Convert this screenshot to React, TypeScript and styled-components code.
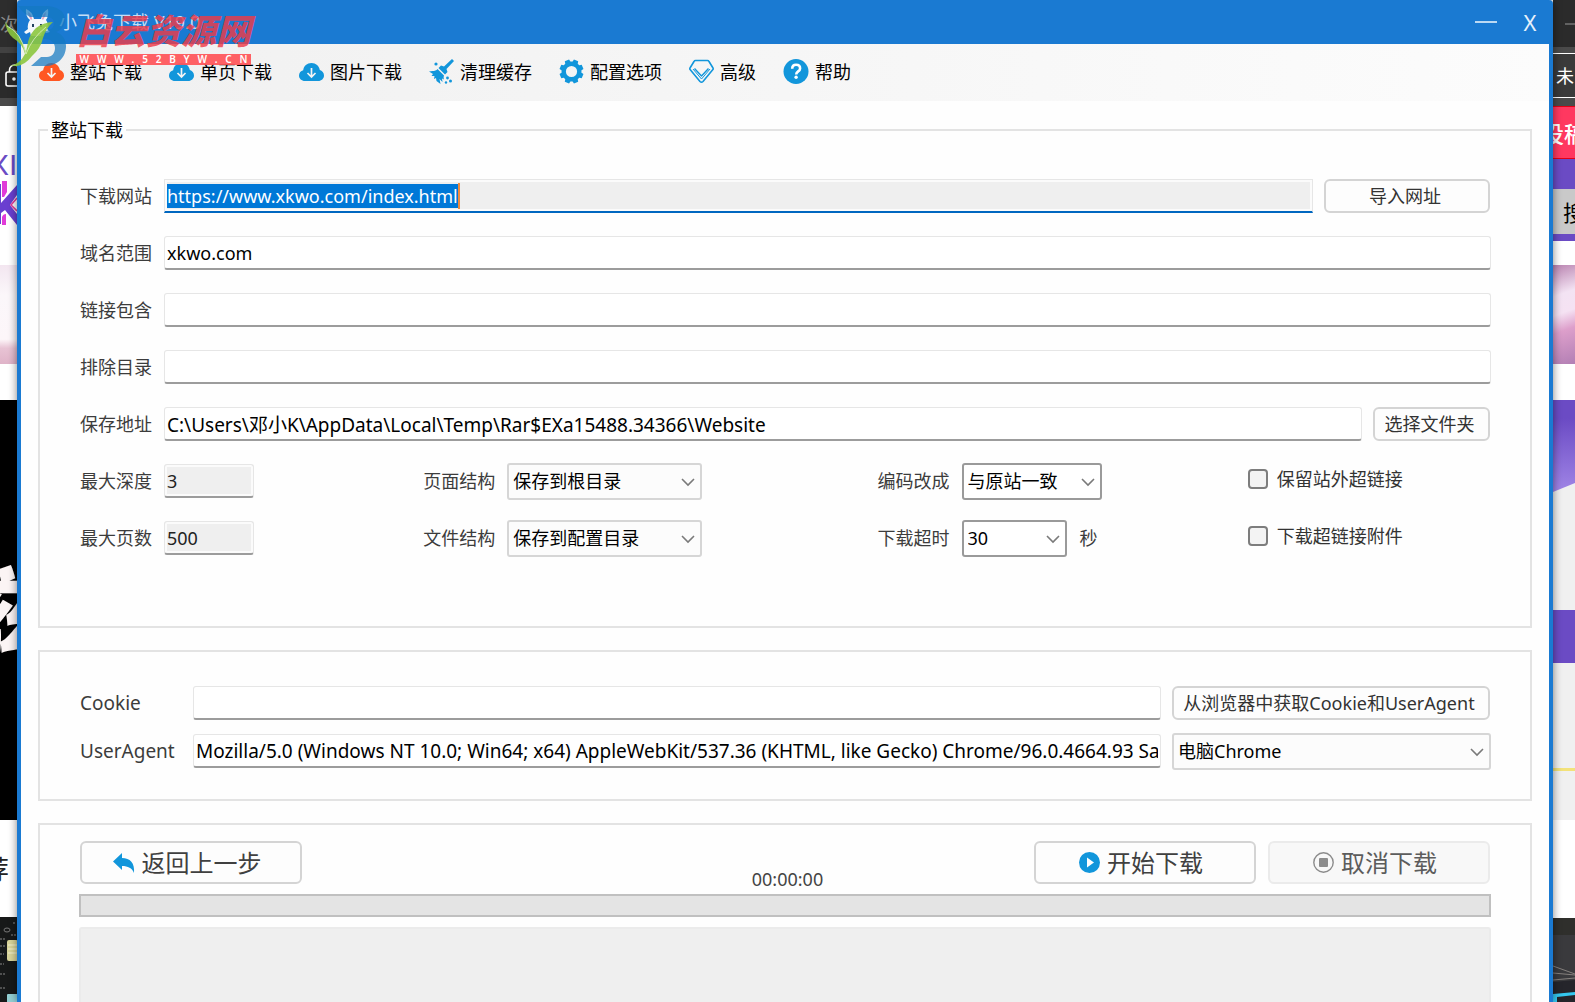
import React, { useEffect, useRef } from "react";
import styled, { createGlobalStyle, css } from "styled-components";

const blue = "#1a7ad2";
const iconBlue = "#1296db";

const GlobalStyle = createGlobalStyle`
  *, *::before, *::after { box-sizing: border-box; }
  html, body, #root { height: 100%; }
  body {
    margin: 0;
    overflow: hidden;
    background: #fff;
    color: #000;
    font-family: "Noto Sans", "Noto Sans CJK SC", sans-serif;
    font-size: 18px;
    line-height: 26px;
  }
  button, input, select { font: inherit; color: inherit; margin: 0; }
`;

/* ---------- desktop behind the window ---------- */

const Desktop = styled.div`
  position: relative;
  display: flex;
  height: 100vh;
  overflow: hidden;
`;

const Strip = styled.div<{ $width: number }>`
  flex: 0 0 ${(p) => p.$width}px;
  display: flex;
  flex-direction: column;
  overflow: hidden;
`;

const Band = styled.div<{
  $h?: number;
  $bg: string;
  $color?: string;
  $size?: number;
  $weight?: number;
  $shift?: number;
  $line?: string;
  $italic?: boolean;
}>`
  flex: ${(p) => (p.$h ? `0 0 ${p.$h}px` : "1 1 0")};
  display: flex;
  align-items: center;
  overflow: hidden;
  white-space: nowrap;
  background: ${(p) => p.$bg};
  color: ${(p) => p.$color ?? "#000"};
  font-size: ${(p) => p.$size ?? 18}px;
  font-weight: ${(p) => p.$weight ?? 400};
  font-style: ${(p) => (p.$italic ? "italic" : "normal")};
  text-indent: ${(p) => p.$shift ?? 0}px;
  ${(p) => p.$line && css`border: solid ${p.$line}; border-width: 1px 0;`}
`;

const SiteName = styled(Band)`
  font-family: "Liberation Sans", sans-serif;
`;

/* ---------- window ---------- */

const Window = styled.div`
  position: relative;
  flex: 1 1 0;
  min-width: 0;
  display: flex;
  flex-direction: column;
  background: #fefefe;
  border: solid ${blue};
  border-width: 0 4px;
  border-radius: 4px 4px 0 0;
  box-shadow: 0 0 8px rgba(0, 0, 0, 0.5);
`;

const TitleBar = styled.header`
  flex: 0 0 44px;
  display: flex;
  align-items: center;
  padding: 0 8px 0 2px;
  background: ${blue};
  color: #fff;
`;

const Title = styled.h1`
  margin: 0 auto 0 6px;
  font-size: 18px;
  font-weight: 400;
  line-height: 26px;
  color: #c4def6;
`;

const CaptionButton = styled.button`
  display: grid;
  place-items: center;
  width: 22px;
  height: 30px;
  margin-left: 22px;
  padding: 0;
  border: 0;
  background: none;
  font-size: 22px;
  line-height: 30px;
  color: #e6f1fb;
`;

const Toolbar = styled.nav`
  flex: 0 0 57px;
  display: flex;
  align-items: center;
  gap: 27px;
  padding: 0 18px 2px;
  background: linear-gradient(90deg, #f0f0f0, #fcfcfc);
`;

const ToolButton = styled.button`
  display: flex;
  align-items: center;
  gap: 6px;
  padding: 0;
  border: 0;
  background: none;
  white-space: nowrap;
`;

const Main = styled.main`
  flex: 1 1 0;
  min-height: 0;
  display: flex;
  flex-direction: column;
  gap: 22px;
  padding: 17px 17px 0;
  overflow: hidden;
`;

const groupFrame = css`
  flex: none;
  min-width: 0;
  margin: 0;
  border: 2px solid #e3e3e3;
`;

const FieldGroup = styled.fieldset`
  ${groupFrame}
  padding: 0;
`;

const Legend = styled.legend`
  height: 24px;
  margin-left: 8px;
  padding: 0 3px;
  line-height: 24px;
`;

const Group = styled.section`
  ${groupFrame}
`;

const ProgressGroup = styled(Group)`
  flex: 1 1 0;
  display: flex;
  flex-direction: column;
  gap: 10px;
  padding: 16px 39px 0;
  border-bottom: 0;
`;

const Rows = styled.div<{ $gap: number; $top: number; $bottom: number }>`
  display: flex;
  flex-direction: column;
  gap: ${(p) => p.$gap}px;
  padding: ${(p) => p.$top}px 39px ${(p) => p.$bottom}px 40px;
`;

const Row = styled.div`
  display: flex;
  align-items: center;
  height: 38px;
  gap: 11px;
`;

const OptionRow = styled.div`
  display: grid;
  grid-template-columns: 343fr 454fr 370fr 243fr;
  align-items: center;
  height: 38px;
`;

const Field = styled.div<{ $grow?: boolean }>`
  display: flex;
  align-items: center;
  min-width: 0;
  flex: ${(p) => (p.$grow ? "1 1 0" : "none")};
`;

const Label = styled.label<{ $width: number; $latin?: boolean }>`
  flex: 0 0 ${(p) => p.$width}px;
  font-size: ${(p) => (p.$latin ? 19 : 18)}px;
  color: #3c3c3c;
  white-space: nowrap;
`;

const TextInput = styled.input<{ $width?: number; $latin?: boolean }>`
  flex: ${(p) => (p.$width ? `0 0 ${p.$width}px` : "1 1 0")};
  width: ${(p) => (p.$width ? `${p.$width}px` : "auto")};
  min-width: 0;
  height: 34px;
  padding: 0 2px;
  border: 1px solid #e6e6e6;
  border-bottom: 2px solid #9c9c9c;
  border-radius: 3px;
  background: #fff;
  outline: 0;
  font-size: ${(p) => (p.$latin ? 19 : 18)}px;
  &[readonly] {
    background: #efefef;
    box-shadow: inset 0 0 0 2px #fbfbfb;
    color: #222;
  }
`;

const UrlInput = styled(TextInput)`
  border-bottom-color: #0067c0;
  border-radius: 0;
  &[readonly] {
    background: linear-gradient(#f08a3c, #f08a3c) 293px 3px / 2px 26px no-repeat #efefef;
  }
  &::selection {
    background: #0078d7;
    color: #fff;
  }
`;

const SelectBox = styled.div<{ $width: number; $strong?: boolean }>`
  position: relative;
  flex: 0 0 ${(p) => p.$width}px;
  select {
    appearance: none;
    display: block;
    width: 100%;
    height: 37px;
    padding: 0 30px 0 4px;
    border: 2px solid ${(p) => (p.$strong ? "#9a9a9a" : "#d6d6d6")};
    border-radius: 3px;
    background: ${(p) => (p.$strong ? "#fff" : "#fcfcfc")};
    outline: 0;
  }
  svg {
    position: absolute;
    right: 6px;
    top: 13px;
    pointer-events: none;
  }
`;

const Unit = styled.span`
  margin-left: 13px;
  color: #3c3c3c;
`;

const Check = styled.label`
  display: flex;
  align-items: center;
  gap: 9px;
  padding-bottom: 4px;
  color: #333;
  white-space: nowrap;
  input {
    appearance: none;
    width: 20px;
    height: 20px;
    border: 2px solid #7d7d7d;
    border-radius: 4px;
    background: #f3f3f3;
  }
`;

const PushButton = styled.button<{ $width: number }>`
  flex: 0 0 ${(p) => p.$width}px;
  height: 34px;
  margin-right: 1px;
  padding: 0 4px 0 0;
  border: 2px solid #d4d4d4;
  border-radius: 6px;
  background: #fdfdfd;
  color: #333;
  white-space: nowrap;
  line-height: 26px;
`;

const Actions = styled.div`
  display: grid;
  grid-template-columns: 1fr auto 1fr;
  padding: 0 1px;
`;

const ActionGroup = styled.div`
  display: flex;
  justify-content: flex-end;
  gap: 12px;
`;

const ActionButton = styled.button`
  display: flex;
  align-items: center;
  justify-content: center;
  gap: 7px;
  width: 222px;
  height: 43px;
  padding: 0 8px 0 0;
  border: 2px solid #d4d4d4;
  border-radius: 6px;
  background: #fdfdfd;
  color: #404040;
  font-size: 24px;
  line-height: 34px;
  white-space: nowrap;
  &:disabled {
    border-color: #ebebeb;
    background: #f8f8f8;
    color: #5c5c5c;
  }
`;

const Timer = styled.time`
  align-self: flex-end;
  margin-bottom: -8px;
  padding-left: 5px;
  color: #444;
`;

const Progress = styled.div`
  flex: 0 0 23px;
  border: 2px solid #c0c0c0;
  background: #e4e4e4;
`;

const Log = styled.div`
  flex: 1 1 0;
  border: 2px solid #ebebeb;
  border-bottom: 0;
  border-radius: 3px 3px 0 0;
  background: #efefef;
`;

/* ---------- watermark ---------- */

const Watermark = styled.div`
  position: absolute;
  left: 4px;
  top: 4px;
  display: flex;
  gap: 10px;
  pointer-events: none;
`;

const MarkText = styled.div`
  display: flex;
  flex-direction: column;
  gap: 4px;
`;

const MarkName = styled.div`
  height: 46px;
  font-family: "Noto Sans CJK SC", sans-serif;
  font-size: 35px;
  font-weight: 900;
  font-style: italic;
  line-height: 50px;
  white-space: nowrap;
  color: rgba(240, 58, 72, 0.82);
`;

const MarkUrl = styled.div`
  height: 11px;
  width: 175px;
  text-align: center;
  white-space: pre;
  font-size: 10px;
  line-height: 11px;
  font-weight: 600;
  color: #fff;
  background: rgba(255, 84, 88, 0.92);
`;

/* ---------- drawings ---------- */

const Chevron = () => (
  <svg width="16" height="12" viewBox="0 0 16 12" fill="none" stroke="#7a7a7a" strokeWidth="1.6">
    <path d="M2 3l6 6 6-6" />
  </svg>
);

const Cloud = ({ color = iconBlue }: { color?: string }) => (
  <svg width="25" height="25" viewBox="0 0 25 25">
    <path
      fill={color}
      d="M6 22C2.600 22 0 19.600 0 16.500c0-2.700 1.800-4.700 4.200-5.300C4.700 7 8.100 4 12.500 4c4.300 0 7.700 2.900 8.300 7 2.400.7 4.200 2.800 4.200 5.500 0 3.100-2.500 5.500-5.800 5.500z"
    />
    <path d="M12.500 9v9M8.500 14l4 4 4-4" stroke="#f4f4f4" strokeWidth="1.700" fill="none" />
  </svg>
);

const Broom = () => (
  <svg width="25" height="25" viewBox="0 0 25 25" fill={iconBlue}>
    <path d="M23 0l2 2-7.500 8 1 3-2.500 2.500L9.500 9 12 6.500l3 1z" />
    <path d="M8.500 10l6.500 6.500c-.5 1.500-.5 2.500 0 4l-2-1 .5 3.500-3-3 1 5-4-3-.5-3-2 1 .5-3L2.500 17l1.500-2-4-2.500 3.500-.5C5.500 12 7.500 11.500 8.500 10z" />
    <circle cx="7" cy="5" r="1.600" />
    <circle cx="18.500" cy="19" r="1.400" />
    <circle cx="21.500" cy="22" r="1.500" />
    <circle cx="17" cy="23.500" r="1.200" />
  </svg>
);

const Gear = () => (
  <svg width="25" height="25" viewBox="0 0 25 25">
    <g fill={iconBlue}>
      {[22.5, 67.5, 112.5, 157.5, 202.5, 247.5, 292.5, 337.5].map((a) => (
        <path key={a} d="M9.300 5l.9-4.500h4.600l.9 4.500z" transform={`rotate(${a} 12.500 12.500)`} />
      ))}
    </g>
    <circle cx="12.500" cy="12.500" r="7.800" fill="none" stroke={iconBlue} strokeWidth="4.400" />
  </svg>
);

const Gem = () => (
  <svg width="25" height="25" viewBox="0 0 25 25" fill="none" stroke={iconBlue} strokeLinejoin="round">
    <path d="M6.500 1.500h12q1 0 1.500 1l4 6.500q.5 1-.3 1.800L14 22.500q-1.500 1.500-3 0L1.300 10.800Q.5 10 1 9l4-6.500q.5-1 1.500-1z" strokeWidth="1.600" />
    <path d="M5.500 9.500l7 7.500 7-7.500" strokeWidth="1.400" />
    <path d="M4 10l8.500 10L21 10" strokeWidth="1" />
  </svg>
);

const Help = () => (
  <svg width="26" height="25" viewBox="0 0 26 25" fill="none">
    <circle cx="13" cy="12.500" r="12.500" fill={iconBlue} />
    <path d="M9.200 9.800c0-2.500 1.600-4 3.900-4s4 1.400 4 3.600c0 3-3.900 3-3.900 6" stroke="#fff" strokeWidth="2.600" />
    <circle cx="13.100" cy="18.300" r="1.700" fill="#fff" />
  </svg>
);

const Reply = () => (
  <svg width="22" height="20" viewBox="0 0 22 20">
    <path fill={iconBlue} d="M9 0v5c8 0 13 5 12 15-2-5-6-7-12-7v4L0 8.500z" />
  </svg>
);

const Play = () => (
  <svg width="21" height="21" viewBox="0 0 21 21">
    <circle cx="10.500" cy="10.500" r="10.500" fill={iconBlue} />
    <path fill="#fff" d="M8 5.500l7 5-7 5z" />
  </svg>
);

const Stop = () => (
  <svg width="21" height="21" viewBox="0 0 21 21">
    <circle cx="10.500" cy="10.500" r="9.700" fill="none" stroke="#8c8c8c" strokeWidth="1.400" />
    <rect x="6" y="6" width="9" height="9" rx="1" fill="#8c8c8c" />
  </svg>
);

const Rabbit = () => (
  <svg width="30" height="30" viewBox="0 0 30 30">
    <path fill="#f4f7fb" d="M3 2q6 2 8 10h7q2-8 7-10 1 7-2 11 3 4 1 9l3 3-4 1-1-1-2 4H8l-1-4-4 2-2-2 4-3q-1-5 2-9-5-4-4-11z" />
    <path fill="#e8a0bd" d="M5 5q4 3 4 7l-1 1Q5 9 5 5zm18 0q0 4-3 8l-1-1q1-5 4-7z" />
    <path fill="#23415f" d="M9 17h2v3H9zm8 0h2v3h-2z" />
    <path fill="#e48aa5" d="M13 21h3l-1.500 2z" />
  </svg>
);

const Lock = () => (
  <svg width="17" height="24" viewBox="0 0 17 24" fill="none" stroke="#fff" strokeWidth="1.600">
    <rect x="6" y="8" width="18" height="14" rx="2" />
    <path d="M9.500 8V6a5 5 0 0 1 10 0v2" />
    <circle cx="14" cy="15" r="1" fill="#fff" />
  </svg>
);

const SiteLogo = () => (
  <svg width="17" height="46" viewBox="0 0 17 46">
    <path fill="#e03bd8" d="M2 1h5v11l-3 5H2zM2 37q1-3 4-3v11H2z" />
    <path fill="#6a3fd0" d="M0 4h1v40H0zM17 5v10L10 25l7 9v11L5 30l-4 3V23z" />
    <path fill="none" stroke="#e03b9a" strokeWidth="1.600" d="M17 18l-6 7 6 6" />
  </svg>
);

const MarkLogo = () => (
  <svg width="62" height="62" viewBox="0 0 62 62">
    <path fill="#1479c0" fillOpacity=".72" d="M14 2h27c12 0 20 5 20 14 0 6-4 10-9 12 6 2 10 7 10 14 0 12-9 20-21 20H27l10-9h6c5 0 8-4 8-9s-4-9-9-9h-7l4-8c6 0 11-2 11-8 0-4-3-6-8-6H26q-6-3-12-11z" />
    <path fill="#8cc63f" fillOpacity=".9" d="M1 17q1 11 8 17 10 6 12 16-5 10-15 12 13 2 22-10 9-8 11-18 3-10 10-16-20 1-25 20l-2 10Q16 29 8 25q-5-3-7-8z" />
    <path fill="none" stroke="#e8f5d5" strokeOpacity=".7" d="M3 22q14 6 19 28 6-16 20-27" />
  </svg>
);

const DarkPhoto = () => (
  <svg width="17" height="84" viewBox="0 0 17 84">
    <rect width="17" height="84" fill="#171919" />
    <ellipse cx="7" cy="12" rx="3" ry="2" fill="none" stroke="#777" />
    <path stroke="#888" strokeDasharray="2 1" d="M11 17h6M0 21h5M0 28h5M0 36h4M0 46h4M0 56h5M0 70h5M13 5h3" />
    <rect x="7" y="22" width="11" height="21" rx="2" fill="#d9d59a" />
    <path stroke="#f3f1d0" d="M8 27h9M8 31h9M8 35h9" />
    <rect x="7" y="76" width="11" height="10" rx="1" fill="#93cfd3" />
  </svg>
);

const TrackPhoto = () => (
  <svg width="22" height="84" viewBox="0 0 22 84">
    <rect width="22" height="84" fill="#3a3a3d" />
    <rect width="22" height="17" fill="#2f2f2c" />
    <path fill="none" stroke="#85807d" d="M0 48l22 8M0 55l22 2M0 62l22-2" />
    <path fill="#25252b" d="M0 64l22-2v22H0z" />
    <path fill="#35c8f0" d="M0 76l22-2v3L4 79v5H0z" />
  </svg>
);

const Hill = () => (
  <svg width="22" height="210" viewBox="0 0 22 210">
    <defs>
      <linearGradient id="hill" x1="0" y1="0" x2="0" y2="1">
        <stop offset="0.200" stopColor="#6b4bc4" />
        <stop offset="1" stopColor="#a085e6" />
      </linearGradient>
    </defs>
    <path fill="url(#hill)" d="M0 0h22v83L0 92z" />
  </svg>
);

const petalsLeft = "linear-gradient(180deg, #f3e6f0, #fbf7fa 30%, #fdf6f9 75%, #e8c3d4 84%, #dfb3c8)";
const petalsRight = "linear-gradient(160deg, #b983b0, #f3e3f3 30%, #f5e2f3 48%, #dd9fcb 65%, #b27fb4)";

const tools: [string, React.ReactNode][] = [
  ["整站下载", <Cloud color="#ff5722" />],
  ["单页下载", <Cloud />],
  ["图片下载", <Cloud />],
  ["清理缓存", <Broom />],
  ["配置选项", <Gear />],
  ["高级", <Gem />],
  ["帮助", <Help />],
];

const Dropdown = ({ id, width, strong, value }: { id: string; width: number; strong?: boolean; value: string }) => (
  <SelectBox $width={width} $strong={strong}>
    <select id={id} defaultValue={value}>
      <option>{value}</option>
    </select>
    <Chevron />
  </SelectBox>
);

export default function App() {
  const url = useRef<HTMLInputElement>(null);

  useEffect(() => {
    url.current?.focus();
    url.current?.select();
  }, []);

  return (
    <Desktop>
      <GlobalStyle />
      <Strip $width={17}>
        <Band $h={47} $bg="#2d2d2d" $color="#8a8a8a">次</Band>
        <Band $h={6} $bg="#424242" />
        <Band $h={45} $bg="#2b2b2b"><Lock /></Band>
        <Band $h={8} $bg="#4a4a4a" />
        <Band $h={46} $bg="#fff" />
        <SiteName $h={26} $bg="#fff" $color="#6a4bc4" $size={30} $shift={-11}>XI.</SiteName>
        <Band $h={50} $bg="#fff"><SiteLogo /></Band>
        <Band $h={37} $bg="#fff" />
        <Band $h={99} $bg={petalsLeft} />
        <Band $h={36} $bg="#fff" />
        <Band $h={420} $bg="#000" $color="#fbf4f4" $size={96} $weight={900} $shift={-58} $italic>滋</Band>
        <Band $h={97} $bg="#fff" $color="#222" $size={26} $shift={-17}>荐</Band>
        <Band $bg="#171919"><DarkPhoto /></Band>
      </Strip>

      <Window>
        <TitleBar>
          <Rabbit />
          <Title>小飞兔下载 V19.0</Title>
          <CaptionButton aria-label="最小化">
            <svg width="22" height="2" viewBox="0 0 22 2"><path d="M0 1h22" stroke="#e6f1fb" strokeWidth="1.600" /></svg>
          </CaptionButton>
          <CaptionButton>X</CaptionButton>
        </TitleBar>

        <Toolbar>
          {tools.map(([name, icon]) => (
            <ToolButton key={name}>
              {icon}
              {name}
            </ToolButton>
          ))}
        </Toolbar>

        <Main>
          <FieldGroup>
            <Legend>整站下载</Legend>
            <Rows $gap={19} $top={35} $bottom={69}>
              <Row>
                <Field $grow>
                  <Label $width={84} htmlFor="url">下载网站</Label>
                  <UrlInput id="url" ref={url} readOnly defaultValue="https://www.xkwo.com/index.html" />
                </Field>
                <PushButton $width={166}>导入网址</PushButton>
              </Row>
              <Row>
                <Field $grow>
                  <Label $width={84} htmlFor="domain">域名范围</Label>
                  <TextInput id="domain" defaultValue="xkwo.com" />
                </Field>
              </Row>
              <Row>
                <Field $grow>
                  <Label $width={84} htmlFor="include">链接包含</Label>
                  <TextInput id="include" />
                </Field>
              </Row>
              <Row>
                <Field $grow>
                  <Label $width={84} htmlFor="exclude">排除目录</Label>
                  <TextInput id="exclude" />
                </Field>
              </Row>
              <Row>
                <Field $grow>
                  <Label $width={84} htmlFor="path">保存地址</Label>
                  <TextInput id="path" $latin defaultValue={"C:\\Users\\邓小K\\AppData\\Local\\Temp\\Rar$EXa15488.34366\\Website"} />
                </Field>
                <PushButton $width={117}>选择文件夹</PushButton>
              </Row>
              <OptionRow>
                <Field>
                  <Label $width={84} htmlFor="depth">最大深度</Label>
                  <TextInput id="depth" $width={90} readOnly defaultValue="3" />
                </Field>
                <Field>
                  <Label $width={84} htmlFor="page">页面结构</Label>
                  <Dropdown id="page" width={195} value="保存到根目录" />
                </Field>
                <Field>
                  <Label $width={84} htmlFor="encoding">编码改成</Label>
                  <Dropdown id="encoding" width={140} strong value="与原站一致" />
                </Field>
                <Check><input type="checkbox" />保留站外超链接</Check>
              </OptionRow>
              <OptionRow>
                <Field>
                  <Label $width={84} htmlFor="pages">最大页数</Label>
                  <TextInput id="pages" $width={90} readOnly defaultValue="500" />
                </Field>
                <Field>
                  <Label $width={84} htmlFor="files">文件结构</Label>
                  <Dropdown id="files" width={195} value="保存到配置目录" />
                </Field>
                <Field>
                  <Label $width={84} htmlFor="timeout">下载超时</Label>
                  <Dropdown id="timeout" width={105} strong value="30" />
                  <Unit>秒</Unit>
                </Field>
                <Check><input type="checkbox" />下载超链接附件</Check>
              </OptionRow>
            </Rows>
          </FieldGroup>

          <Group>
            <Rows $gap={10} $top={32} $bottom={29}>
              <Row>
                <Field $grow>
                  <Label $width={113} $latin htmlFor="cookie">Cookie</Label>
                  <TextInput id="cookie" />
                </Field>
                <PushButton $width={318}>从浏览器中获取Cookie和UserAgent</PushButton>
              </Row>
              <Row>
                <Field $grow>
                  <Label $width={113} $latin htmlFor="agent">UserAgent</Label>
                  <TextInput
                    id="agent"
                    $latin
                    defaultValue="Mozilla/5.0 (Windows NT 10.0; Win64; x64) AppleWebKit/537.36 (KHTML, like Gecko) Chrome/96.0.4664.93 Safari/537.36"
                  />
                </Field>
                <Dropdown id="browser" width={319} value="电脑Chrome" />
              </Row>
            </Rows>
          </Group>

          <ProgressGroup>
            <Actions>
              <ActionButton><Reply />返回上一步</ActionButton>
              <Timer>00:00:00</Timer>
              <ActionGroup>
                <ActionButton><Play />开始下载</ActionButton>
                <ActionButton disabled><Stop />取消下载</ActionButton>
              </ActionGroup>
            </Actions>
            <Progress role="progressbar" aria-valuenow={0} />
            <Log />
          </ProgressGroup>
        </Main>
      </Window>

      <Strip $width={22}>
        <Band $h={47} $bg="#2b2b2b">
          <svg width="22" height="2" viewBox="0 0 22 2"><path d="M12 1h10" stroke="#999" /></svg>
        </Band>
        <Band $h={6} $bg="#4a4a4a" />
        <Band $h={45} $bg="#3a3a3a" $color="#fff" $shift={3} $line="#fff">未</Band>
        <Band $h={8} $bg="#4a4a4a" />
        <Band $h={53} $bg="#ff3860" $color="#fff" $size={22} $weight={500} $shift={-11} $line="#e60012">投稿</Band>
        <Band $h={30} $bg="#6b4bc4" />
        <Band $h={45} $bg="#c9c9c9" $size={22} $shift={10}>搜</Band>
        <Band $h={7} $bg="#6b4bc4" />
        <Band $h={24} $bg="#fff" />
        <Band $h={99} $bg={petalsRight} />
        <Band $h={36} $bg="#fff" />
        <Band $h={210} $bg="#f0f0f0"><Hill /></Band>
        <Band $h={53} $bg="#6b4bc4" />
        <Band $h={105} $bg="#f0f0f0" />
        <Band $h={3} $bg="#f3e27a" />
        <Band $h={49} $bg="#f0f0f0" />
        <Band $h={98} $bg="#fff" />
        <Band $bg="#3a3a3d"><TrackPhoto /></Band>
      </Strip>

      <Watermark>
        <MarkLogo />
        <MarkText>
          <MarkName>白云资源网</MarkName>
          <MarkUrl>{"W   W   W   .   5   2   B   Y   W   .   C   N"}</MarkUrl>
        </MarkText>
      </Watermark>
    </Desktop>
  );
}
